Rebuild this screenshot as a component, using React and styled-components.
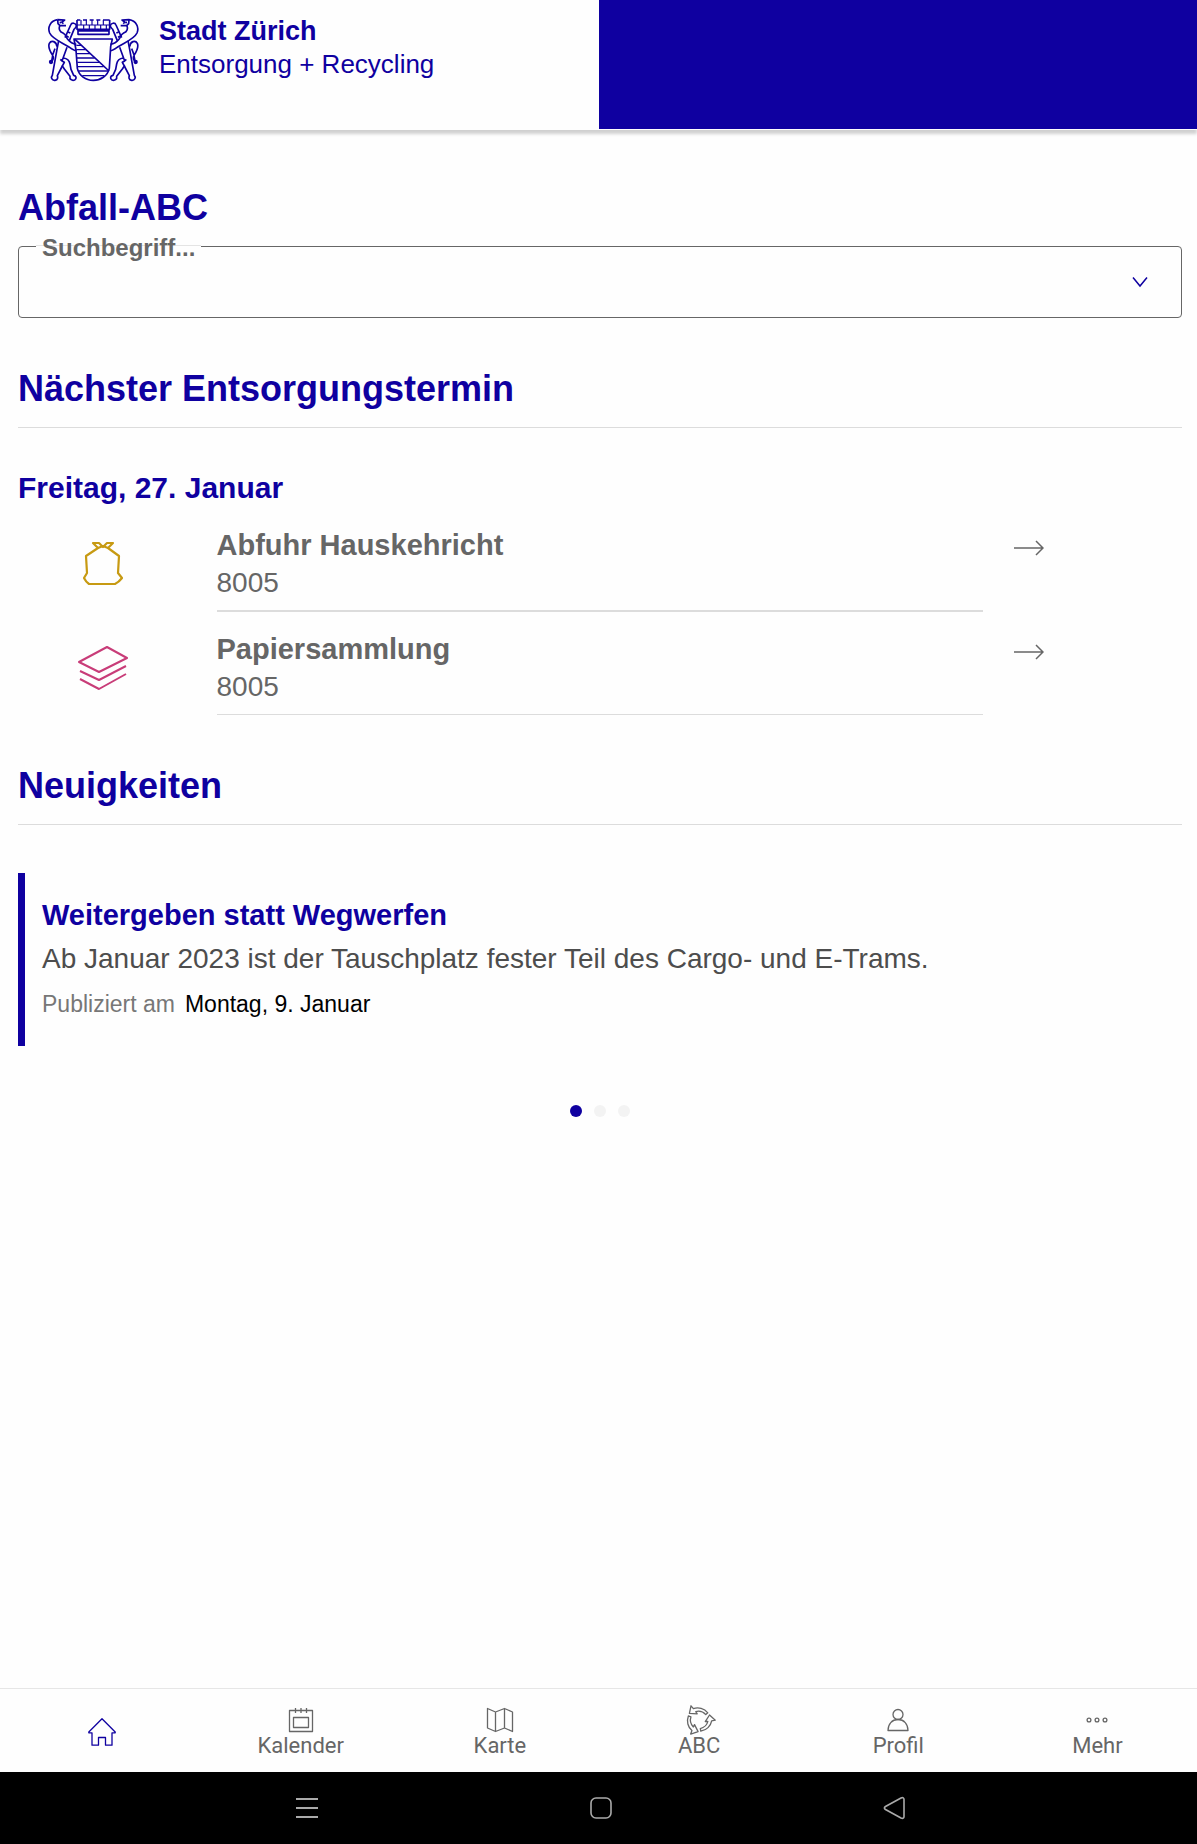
import React from "react";
import styled, { createGlobalStyle } from "styled-components";

const GlobalStyle = createGlobalStyle`
  * {
    box-sizing: border-box;
  }
  body {
    margin: 0;
    background-color: #fefefe;
    font-family: "Liberation Sans", Arial, sans-serif;
  }
`;

const Page = styled.div`
  display: flex;
  flex-direction: column;
  min-height: 100vh;
`;

const Header = styled.header`
  display: grid;
  grid-template-columns: 1fr 1fr;
  height: 130px;
  border-bottom: 1px solid #fefefe;
  box-shadow: 0 4px 3px rgba(0, 0, 0, 0.18);
`;

const Brand = styled.a`
  display: flex;
  align-items: flex-start;
  gap: 19px;
  padding: 14px 24px 0 47px;
  color: #0f00a0;
  text-decoration: none;
`;

const BrandText = styled.div`
  display: flex;
  flex-direction: column;
  padding-top: 1px;
  font-size: 26px;
  line-height: 33px;
`;

const BrandName = styled.strong`
  font-size: 27px;
`;

const HeaderPanel = styled.div`
  background-color: #0f00a0;
`;

const Main = styled.main`
  flex: 1;
  padding: 56px 15px 48px 18px;
`;

const Section = styled.section`
  margin-bottom: 49px;
`;

const Title = styled.h2`
  margin: 0 0 ${(props) => (props.$line ? 41 : 16)}px;
  padding-bottom: ${(props) => (props.$line ? 16 : 0)}px;
  border-bottom: ${(props) => (props.$line ? "1px solid #dcdcdc" : "none")};
  color: #0f00a0;
  font-size: 36px;
  line-height: 44px;
  font-weight: bold;
`;

const SearchField = styled.div`
  position: relative;
  display: flex;
  align-items: center;
`;

const SearchLabel = styled.label`
  position: absolute;
  top: -12px;
  left: 18px;
  padding: 0 6px;
  background: linear-gradient(#e4e4e4, #e4e4e4) 0 11px / 100% 1px no-repeat
    #fefefe;
  color: #666;
  font-size: 24px;
  line-height: 27px;
  font-weight: bold;
`;

const SearchSelect = styled.select`
  appearance: none;
  width: 100%;
  height: 72px;
  padding: 0 64px 0 24px;
  border: 1px solid #666;
  border-radius: 4px;
  background-color: transparent;
  color: #666;
  font-family: inherit;
  font-size: 24px;
`;

const SearchArrow = styled.svg`
  position: absolute;
  right: 34px;
  pointer-events: none;
`;

const DateTitle = styled.h3`
  margin: 0 0 20px;
  color: #0f00a0;
  font-size: 30px;
  line-height: 37px;
`;

const PickupList = styled.ul`
  display: flex;
  flex-direction: column;
  gap: 18px;
  margin: 0 -15px 0 -18px;
  padding: 0;
  list-style: none;
`;

const PickupText = styled.div`
  margin: 0 15px 0 17px;
  padding: 1px 0 9px;
  border-bottom: 2px solid #dcdcdc;
  color: #666;
  font-size: 28px;
  line-height: 37px;
`;

const PickupItem = styled.li`
  display: grid;
  grid-template-columns: 2fr 8fr 2fr;
  &:last-child ${PickupText} {
    border-bottom-width: 1px;
  }
`;

const PickupIcon = styled.div`
  display: flex;
  justify-content: center;
  padding: 12px 0 0 7px;
`;

const PickupName = styled.h4`
  margin: 0;
  font-size: 29px;
`;

const PickupLink = styled.a`
  align-self: start;
  padding: 11px 16px 0;
  line-height: 0;
`;

const NewsCard = styled.article`
  margin-top: 48px;
  padding: 24px 17px 28px;
  border-left: 7px solid #0f00a0;
`;

const NewsTitle = styled.h3`
  margin: 0 0 6px;
  color: #0f00a0;
  font-size: 29px;
  line-height: 37px;
`;

const NewsText = styled.p`
  margin: 0 0 13px;
  color: #4d4d4d;
  font-size: 28px;
  line-height: 37px;
`;

const NewsMeta = styled.p`
  display: flex;
  gap: 10px;
  margin: 0;
  color: #777;
  font-size: 23px;
  line-height: 28px;
`;

const NewsDate = styled.time`
  color: #000;
`;

const Dots = styled.div`
  display: flex;
  justify-content: center;
  gap: 12px;
  margin-top: 59px;
`;

const Dot = styled.button`
  width: 12px;
  height: 12px;
  padding: 0;
  border: none;
  border-radius: 50%;
  background-color: ${(props) => (props.$active ? "#0f00a0" : "#f3f3f3")};
`;

const TabBar = styled.nav`
  display: grid;
  grid-template-columns: repeat(6, 1fr);
  height: 84px;
  padding: 2px 0 0 2px;
  border-top: 1px solid #e6e6e6;
`;

const Tab = styled.a`
  display: flex;
  flex-direction: column;
  align-items: center;
  justify-content: center;
  color: ${(props) => (props.$active ? "#0f00a0" : "#666")};
  font-family: Roboto, sans-serif;
  font-size: 22px;
  line-height: 24px;
  text-decoration: none;
`;

const SystemBar = styled.div`
  display: grid;
  grid-template-columns: repeat(3, 1fr);
  height: 72px;
  padding: 0 13% 0 160px;
  background-color: #000;
`;

const SystemButton = styled.button`
  display: flex;
  align-items: center;
  justify-content: center;
  padding: 0;
  border: none;
  background: none;
  color: #aaa;
`;

const Lion = () => (
  <g>
    <path d="M84 59 C62 62 53 82 60 99 C68 117 98 128 118 141 C126 147 132 152 140 152" />
    <path d="M84 59 L85 71 L91 77 L109 77 M90 67 L95 68 M84 59 L105 60 L97 66 L101 71" />
    <path d="M90 77 C86 88 91 95 100 99 C110 104 109 112 114 118 C122 128 132 132 140 133" />
    <path d="M106 113 L123 75 C126 67 138 68 140 77 C141 82 136 84 133 88 L119 122" />
    <path d="M115 96 L122 99 M111 108 L117 112" />
    <path d="M87 122 L82 148 L68 226 C62 232 67 242 76 241 C85 240 85 232 83 227 L98 198" />
    <path d="M112 142 L97 183 L92 178 M97 183 L104 187 L98 198 L104 207 L121 229 C119 238 127 243 135 240 C142 236 140 227 132 226 L124 208 L121 192 C119 181 110 175 101 174" />
    <path d="M82 140 C80 124 65 119 59 130 C53 143 64 158 70 168 M76 146 C70 158 67 170 66 184" />
    <path d="M70 168 C72 174 70 180 66 184" />
    <circle cx="64" cy="186" r="4" fill="currentColor" />
  </g>
);

const CoatOfArms = () => (
  <svg
    width="93"
    height="68"
    viewBox="52 42 279 204"
    fill="none"
    stroke="currentColor"
    strokeWidth="5"
    strokeLinejoin="round"
    aria-hidden="true"
  >
    <path d="M142 60 H152 M160 60 H172 M180 60 H192 M200 60 H212 M220 60 H240 M142 60 V88 H240 V60 M145 88 V103 H238 V88 M145 93 H238" />
    <path
      d="M154 60 V74 M162 74 V88 M170 60 V74 M179 74 V88 M187 60 V74 M196 74 V88 M204 60 V74 M213 74 V88 M221 60 V74 M230 74 V88 M142 75 H240"
      strokeWidth="3.5"
    />
    <path d="M133 117 H248 L243 140 L239 205 C234 228 212 241 191 241 C168 241 148 227 143 205 L139 150 Z" />
    <path d="M136 118 L238 213" />
    <path
      d="M140 136 H154 M140 149 H168 M141 161 H181 M142 174 H195 M143 187 H209 M143 200 H222 M147 213 H236 M158 227 H224"
      strokeWidth="4"
    />
    <Lion />
    <g transform="translate(382 0) scale(-1 1)">
      <Lion />
    </g>
  </svg>
);

const BagIcon = () => (
  <svg
    width="50"
    height="50"
    viewBox="0 0 50 50"
    fill="none"
    stroke="#c79a12"
    strokeWidth="2.2"
    strokeLinejoin="round"
    aria-hidden="true"
  >
    <path d="M20 10 L8 18 L9 35 L6 40 Q8 44 11 46 H37 Q41 44 44 40 L40 35 L41 18 L30 10 L35 5 H29 L25 9 L21 5 H15 Z" />
    <path d="M20 10 L25 8 L30 10" />
  </svg>
);

const PaperIcon = () => (
  <svg
    width="50"
    height="50"
    viewBox="0 0 50 50"
    fill="none"
    stroke="#c83c78"
    strokeWidth="2"
    strokeLinejoin="round"
    aria-hidden="true"
  >
    <path d="M1 20 L29 5 L49 16 L21 30 Z M2 29 L21 38 L48 24 M2 37 L21 47 L48 32" />
  </svg>
);

const ArrowIcon = () => (
  <svg
    width="30"
    height="22"
    viewBox="0 0 30 22"
    fill="none"
    stroke="#666"
    strokeWidth="1.5"
    aria-hidden="true"
  >
    <path d="M0 11 H29 M22 4 L29 11 L22 18" />
  </svg>
);

const TabIcon = ({ children }) => (
  <svg
    width="28"
    height="28"
    viewBox="0 0 28 28"
    overflow="visible"
    fill="none"
    stroke="currentColor"
    strokeWidth="1.3"
    strokeLinejoin="round"
    aria-hidden="true"
  >
    {children}
  </svg>
);

const RecycleArrow = ({ angle }) => (
  <path
    transform={`rotate(${angle} 14 14)`}
    d="M6 -0.2 L4.4 7.4 L12.2 7.8 L10.8 5.6 C14.6 4.6 18.2 5.8 20.8 8.6 L22.8 6.8 C19.2 2.4 13.4 0.8 8.4 2.6 Z"
  />
);

const tabs = [
  {
    icon: <path d="M14 0.8 L27.2 14 V14.8 H24 V27.2 H17.5 V19.5 H10.5 V27.2 H4 V14.8 H0.8 V14 Z" />,
    name: "Start",
    active: true,
  },
  {
    icon: (
      <path d="M2.5 4.5 H25.5 V25.5 H2.5 Z M6.5 11.5 H21.5 V21.5 H6.5 Z M8.5 2 V7 M14 2 V7 M19.5 2 V7" />
    ),
    name: "Kalender",
  },
  {
    icon: (
      <path d="M1.5 2.5 L9.5 6 L18.5 2.5 L26.5 6 V25.5 L18.5 22 L9.5 25.5 L1.5 22 Z M9.5 6 V25.5 M18.5 2.5 V22" />
    ),
    name: "Karte",
  },
  {
    icon: (
      <>
        <RecycleArrow angle={0} />
        <RecycleArrow angle={120} />
        <RecycleArrow angle={240} />
      </>
    ),
    name: "ABC",
  },
  {
    icon: (
      <>
        <circle cx="14" cy="8.5" r="5" />
        <path d="M4 24.5 C4 18 8 13.5 14 13.5 C20 13.5 24 18 24 24.5 Z" />
      </>
    ),
    name: "Profil",
  },
  {
    icon: (
      <>
        <circle cx="6" cy="14" r="1.9" />
        <circle cx="14" cy="14" r="1.9" />
        <circle cx="22" cy="14" r="1.9" />
      </>
    ),
    name: "Mehr",
  },
];

const pickups = [
  { name: "Abfuhr Hauskehricht", zip: "8005", icon: <BagIcon /> },
  { name: "Papiersammlung", zip: "8005", icon: <PaperIcon /> },
];

const App = () => {
  return (
    <Page>
      <GlobalStyle />
      <Header>
        <Brand href="#">
          <CoatOfArms />
          <BrandText>
            <BrandName>Stadt Zürich</BrandName>
            <span>Entsorgung + Recycling</span>
          </BrandText>
        </Brand>
        <HeaderPanel />
      </Header>
      <Main>
        <Section>
          <Title>Abfall-ABC</Title>
          <SearchField>
            <SearchSelect id="search" defaultValue="">
              <option value=""></option>
            </SearchSelect>
            <SearchLabel htmlFor="search">Suchbegriff...</SearchLabel>
            <SearchArrow
              width="16"
              height="12"
              viewBox="0 0 16 12"
              fill="none"
              stroke="#0f00a0"
              strokeWidth="1.5"
            >
              <path d="M1 1.5 L8 10 L15 1.5" />
            </SearchArrow>
          </SearchField>
        </Section>
        <Section>
          <Title $line>Nächster Entsorgungstermin</Title>
          <DateTitle>Freitag, 27. Januar</DateTitle>
          <PickupList>
            {pickups.map((pickup) => (
              <PickupItem key={pickup.name}>
                <PickupIcon>{pickup.icon}</PickupIcon>
                <PickupText>
                  <PickupName>{pickup.name}</PickupName>
                  {pickup.zip}
                </PickupText>
                <PickupLink href="#" aria-label={pickup.name}>
                  <ArrowIcon />
                </PickupLink>
              </PickupItem>
            ))}
          </PickupList>
        </Section>
        <Section>
          <Title $line>Neuigkeiten</Title>
          <NewsCard>
            <NewsTitle>Weitergeben statt Wegwerfen</NewsTitle>
            <NewsText>
              Ab Januar 2023 ist der Tauschplatz fester Teil des Cargo- und
              E-Trams.
            </NewsText>
            <NewsMeta>
              <span>Publiziert am</span>
              <NewsDate dateTime="2023-01-09">Montag, 9. Januar</NewsDate>
            </NewsMeta>
          </NewsCard>
          <Dots>
            <Dot $active aria-label="1" />
            <Dot aria-label="2" />
            <Dot aria-label="3" />
          </Dots>
        </Section>
      </Main>
      <TabBar>
        {tabs.map((tab) => (
          <Tab
            key={tab.name}
            href="#"
            $active={tab.active}
            aria-label={tab.name}
          >
            <TabIcon>{tab.icon}</TabIcon>
            {!tab.active && <span>{tab.name}</span>}
          </Tab>
        ))}
      </TabBar>
      <SystemBar>
        <SystemButton aria-label="Menü">
          <svg width="22" height="22" viewBox="0 0 22 22" fill="none" stroke="currentColor" strokeWidth="2">
            <path d="M0 2 H22 M0 11 H22 M0 20 H22" />
          </svg>
        </SystemButton>
        <SystemButton aria-label="Home">
          <svg width="22" height="22" viewBox="0 0 22 22" fill="none" stroke="currentColor" strokeWidth="1.6">
            <rect x="1" y="1" width="20" height="20" rx="5" />
          </svg>
        </SystemButton>
        <SystemButton aria-label="Zurück">
          <svg width="22" height="24" viewBox="0 0 22 24" fill="none" stroke="currentColor" strokeWidth="1.6">
            <path d="M18 2 L2.5 10.5 C1 11.5 1 12.5 2.5 13.5 L18 22 C20 23 21 22 21 20.5 V3.5 C21 2 20 1 18 2 Z" />
          </svg>
        </SystemButton>
      </SystemBar>
    </Page>
  );
};

export default App;
